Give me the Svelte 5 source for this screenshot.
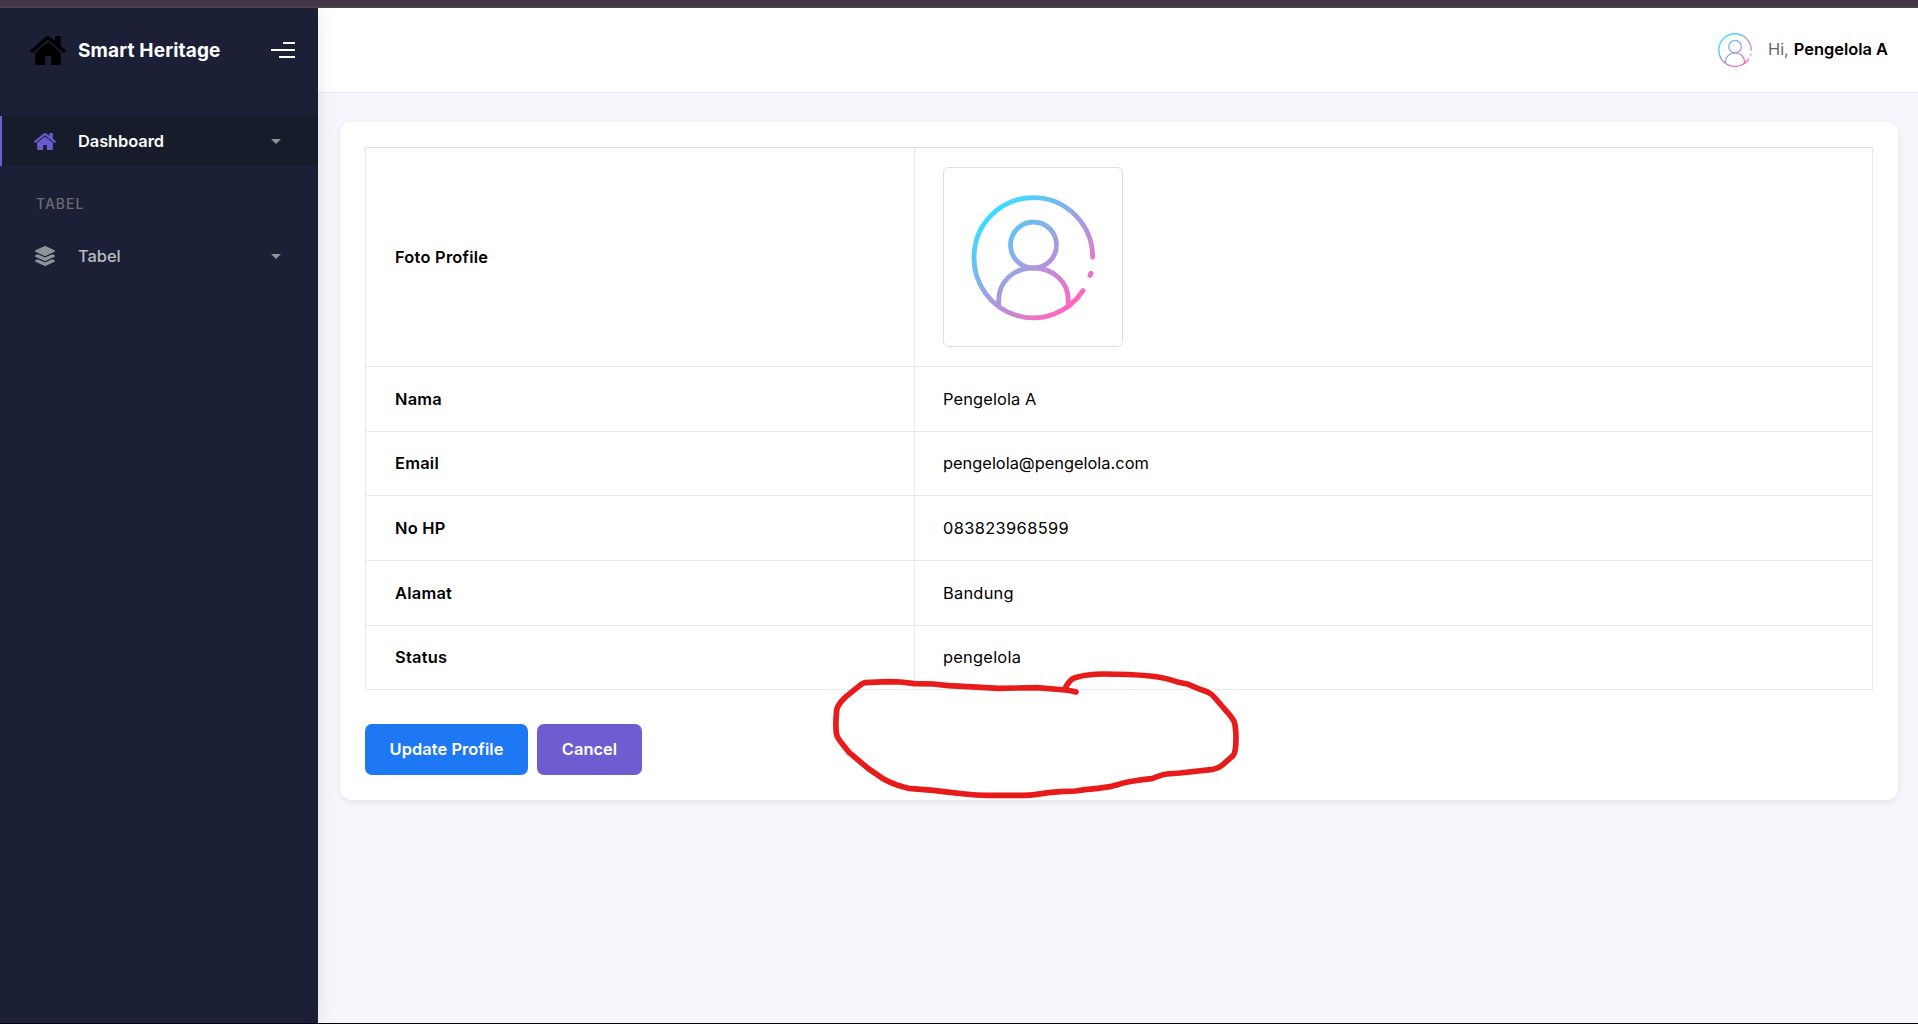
<script>
  const home =
    'M1472 992v480q0 26-19 45t-45 19h-384v-384h-256v384h-384q-26 0-45-19t-19-45v-480q0-1 .5-3t.5-3l575-474 575 474q1 2 1 6zm223-69l-62 74q-8 9-21 11h-3q-13 0-21-7l-692-577-692 577q-12 8-24 7-13-2-21-11l-62-74q-8-10-7-23.5t11-21.5l719-599q32-26 76-26t76 26l244 204v-195q0-14 9-23t23-9h192q14 0 23 9t9 23v408l219 182q10 8 11 21.5t-7 23.5z';
  const layers =
    'M12.41 148.02l232.94 105.67c6.8 3.09 14.49 3.09 21.29 0l232.94-105.67c16.55-7.51 16.55-32.52 0-40.03L266.65 2.31a25.607 25.607 0 0 0-21.29 0L12.41 107.98c-16.55 7.51-16.55 32.53 0 40.04zm487.18 88.28l-58.09-26.33-161.64 73.27c-7.56 3.43-15.59 5.17-23.86 5.17s-16.29-1.74-23.86-5.17L70.51 209.97l-58.1 26.33c-16.55 7.5-16.55 32.5 0 40l232.94 105.59c6.8 3.08 14.49 3.08 21.29 0L499.59 276.3c16.55-7.5 16.55-32.5 0-40zm0 127.8l-57.87-26.23-161.86 73.37c-7.56 3.43-15.59 5.17-23.86 5.17s-16.29-1.74-23.86-5.17L70.29 337.87 12.41 364.1c-16.55 7.5-16.55 32.5 0 40l232.94 105.59c6.8 3.08 14.49 3.08 21.29 0L499.59 404.1c16.55-7.5 16.55-32.5 0-40z';

  const rows = [
    { label: 'Nama', value: 'Pengelola A', kind: 'name' },
    { label: 'Email', value: 'pengelola@pengelola.com', kind: 'email' },
    { label: 'No HP', value: '083823968599', kind: 'phone' },
    { label: 'Alamat', value: 'Bandung', kind: 'city' },
    { label: 'Status', value: 'pengelola', kind: 'role' }
  ];
</script>

{#snippet avatar(id, box)}
  <svg class="avatar" viewBox={box} aria-hidden="true">
    <defs>
      <linearGradient {id} gradientUnits="userSpaceOnUse" x1="215" y1="225" x2="455" y2="490">
        <stop offset="0" stop-color="#3ddcff" />
        <stop offset="1" stop-color="#ff66c0" />
      </linearGradient>
    </defs>
    <g fill="none" stroke="url(#{id})" stroke-width="14.5" stroke-linecap="round">
      <path d="M518 352A178 179.500 1 0 0 162 352A178 179.500 0 0 0 489 452" />
      <path d="M513 400L510 406" />
      <circle cx="340.500" cy="315" r="69" />
      <path d="M236 494V482C236 425 280 384 340 384S445 425 445 482V494" />
    </g>
  </svg>
{/snippet}

<div class="page">
  <div class="strip"></div>
  <div class="shell">
    <aside>
      <div class="brand">
        <svg class="logo" viewBox="89 253 1614 1283" preserveAspectRatio="none"><path d={home} /></svg>
        <span class="brand-name">Smart Heritage</span>
        <span class="burger"><i></i><i></i><i></i></span>
      </div>
      <nav>
        <a class="item active">
          <svg class="home" viewBox="89 253 1614 1283" preserveAspectRatio="none"><path d={home} /></svg>
          <span class="dash">Dashboard</span>
          <b class="caret"></b>
        </a>
        <div class="section">TABEL</div>
        <a class="item">
          <svg class="layers" viewBox="0 0 512 512"><path d={layers} /></svg>
          <span class="tab">Tabel</span>
          <b class="caret"></b>
        </a>
      </nav>
    </aside>
    <div class="content">
      <header>
        <div class="small-avatar">{@render avatar('grad-small', '154 165 372 374')}</div>
        <span class="hi">Hi,</span>
        <span class="user">Pengelola A</span>
      </header>
      <main>
        <section class="card">
          <div class="table">
            <div class="row photo">
              <div class="th">Foto Profile</div>
              <div class="td"><div class="thumb">{@render avatar('grad-large', '72 84 534 534')}</div></div>
            </div>
            {#each rows as row}
              <div class="row">
                <div class="th">{row.label}</div>
                <div class="td {row.kind}">{row.value}</div>
              </div>
            {/each}
          </div>
          <div class="actions">
            <button class="update">Update Profile</button>
            <button class="cancel">Cancel</button>
          </div>
        </section>
      </main>
    </div>
  </div>
  <svg class="scribble" viewBox="0 0 1320 450" aria-hidden="true">
    <path
      d="M768 96Q752 91 735 90L650 83L535 85L430 79L385 77L340 72L283 71L242 66L205 65L134 68Q124 72 116 79L78 110Q53 133 50 150Q46 190 49 220Q50 231 60 243L88 278L145 326L192 358Q225 376 265 385L340 391L390 397L435 402Q470 406 500 406H600Q625 407 650 403Q685 397 720 395L767 393L795 389Q835 386 870 380C895 374 915 366 940 363Q970 358 995 356C1010 352 1022 344 1040 342L1080 339L1180 328Q1195 325 1206 316L1240 286Q1248 275 1248 235Q1248 205 1243 187Q1241 180 1225 160L1185 114Q1174 101 1163 96L1133 85L1105 73L1072 66Q1040 53 990 48Q930 42 850 42Q800 43 765 53Q750 57 738 80"
    />
  </svg>
</div>

<style>
  :global(body) {
    margin: 0;
    overflow: hidden;
  }
  .page {
    position: relative;
    box-sizing: border-box;
    width: 100%;
    height: 1024px;
    display: flex;
    flex-direction: column;
    border-bottom: 1px solid #050208;
    overflow: hidden;
    color: #000;
    font-family: Inter, 'Liberation Sans', sans-serif;
    font-size: 16.4px;
  }
  .strip {
    box-sizing: border-box;
    flex: none;
    height: 8px;
    background: #443648;
    border-bottom: 2px solid #4a444c;
  }
  .shell {
    flex: 1;
    display: flex;
    min-height: 0;
    background: #f5f7fc;
  }
  aside {
    width: 318px;
    flex: none;
    background: #1b2036;
    box-shadow: 0 0 18px rgba(60, 60, 85, 0.12);
    z-index: 1;
  }
  .brand {
    height: 84px;
    display: flex;
    align-items: center;
    padding: 0 23px 0 30px;
    margin-bottom: 24px;
  }
  .logo {
    width: 36px;
    height: 29px;
    margin-right: 12px;
    fill: #000;
  }
  .brand-name {
    color: #fff;
    font-size: 19px;
    font-weight: 700;
    letter-spacing: 0.16px;
    white-space: nowrap;
  }
  .burger {
    margin-left: auto;
    display: flex;
    flex-direction: column;
    align-items: flex-end;
    gap: 5px;
  }
  .burger i {
    width: 12px;
    height: 2px;
    background: #fff;
  }
  .burger i:nth-child(2) {
    width: 24px;
  }
  .burger i:nth-child(3) {
    width: 16px;
  }
  .item {
    box-sizing: border-box;
    display: flex;
    align-items: center;
    height: 50px;
    padding: 0 37px 0 34px;
    color: #b9babf;
    font-weight: 500;
  }
  .active {
    border-left: 2px solid #6e5fd0;
    padding-left: 32px;
    background: #171c2b;
    color: #fff;
    font-weight: 600;
  }
  .dash {
    letter-spacing: -0.05px;
  }
  .home {
    width: 22px;
    height: 17px;
    margin-right: 22px;
    fill: #6a5acd;
  }
  .layers {
    width: 20px;
    height: 20px;
    margin: 0 23px 0 1px;
    fill: #8d9498;
  }
  .caret {
    margin-left: auto;
    border: 5px solid transparent;
    border-top-color: #8d9498;
    border-bottom: 0;
  }
  .section {
    height: 65px;
    line-height: 76px;
    padding-left: 36px;
    color: #6b6c70;
    font-size: 14px;
    letter-spacing: 1px;
    font-weight: 500;
  }
  .content {
    flex: 1;
    min-width: 0;
  }
  header {
    box-sizing: border-box;
    height: 85px;
    display: flex;
    align-items: center;
    justify-content: flex-end;
    padding: 0 30px 0 0;
    background: #fff;
    border-bottom: 1px solid #ebecf0;
  }
  .small-avatar {
    width: 34px;
    height: 34px;
    margin-right: 16px;
  }
  .avatar {
    display: block;
    width: 100%;
    height: 100%;
  }
  .hi,
  .user {
    padding-bottom: 2px;
  }
  .hi {
    color: #67686b;
    margin-right: 5px;
  }
  .user {
    font-weight: 600;
  }
  main {
    padding: 29px 20px 0 22px;
  }
  .card {
    box-sizing: border-box;
    height: 678px;
    padding: 25px;
    border-radius: 12px;
    background: #fff;
    box-shadow: 0 2px 6px rgba(60, 60, 90, 0.1);
  }
  .table {
    box-sizing: border-box;
    height: 543px;
    display: grid;
    grid-template-rows: 219px 65px 64px 65px 65px 64px;
    border: 1px solid #e8e9ee;
    border-top-color: #dddee2;
    border-bottom: 0;
  }
  .row {
    box-sizing: border-box;
    display: grid;
    grid-template-columns: 549px 1fr;
    border-bottom: 1px solid #e8e9ee;
  }
  .th,
  .td {
    display: flex;
    align-items: center;
    padding: 0 0 1px 29px;
    letter-spacing: 0.25px;
  }
  .th {
    box-sizing: border-box;
    font-weight: 600;
    border-right: 1px solid #e8e9ee;
  }
  .td {
    padding-left: 28px;
  }
  .photo .th,
  .photo .td {
    padding-bottom: 0;
  }
  .td.name {
    letter-spacing: 0.13px;
  }
  .td.email {
    letter-spacing: 0;
  }
  .td.phone {
    letter-spacing: 0.37px;
  }
  .thumb {
    box-sizing: border-box;
    width: 180px;
    height: 180px;
    border: 1px solid #dddee4;
    border-radius: 6px;
  }
  .actions {
    display: flex;
    gap: 9px;
    margin-top: 34px;
  }
  button {
    height: 51px;
    padding: 0 0 2px;
    border: 0;
    border-radius: 7px;
    color: #fff;
    font: 600 16.4px Inter, sans-serif;
    letter-spacing: 0.07px;
  }
  .update {
    width: 163px;
    background: #1e78f3;
  }
  .cancel {
    width: 105px;
    background: #6d5dd0;
  }
  .scribble {
    position: absolute;
    left: 820px;
    top: 660px;
    width: 440px;
    height: 150px;
    fill: none;
    stroke: #e81b1b;
    stroke-width: 17;
    stroke-linecap: round;
    stroke-linejoin: round;
    z-index: 2;
  }
</style>
